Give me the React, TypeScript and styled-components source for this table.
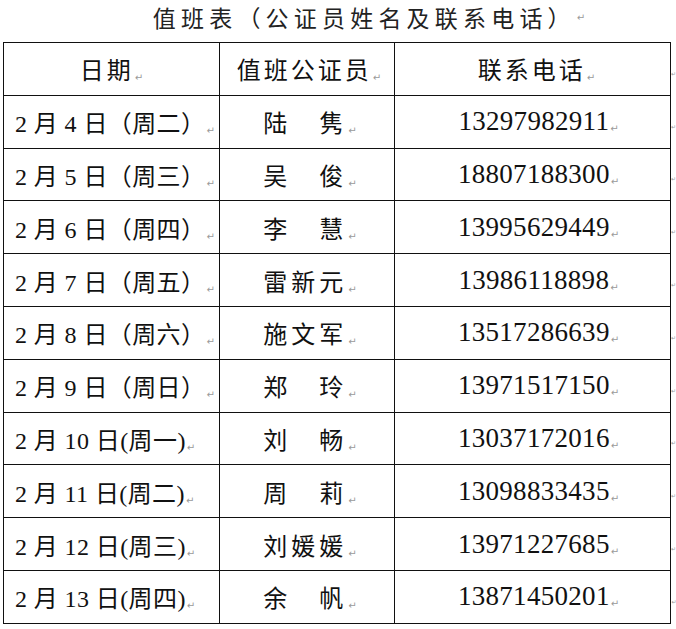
import styled, { createGlobalStyle } from "styled-components";

const GlobalStyle = createGlobalStyle`
  html, body {
    margin: 0;
    padding: 0;
    background: #fff;
  }
  body {
    font-family: "Liberation Serif", "Noto Sans CJK SC", serif;
    color: #111;
  }
`;

const Page = styled.div`
  width: 676px;
  height: 629px;
  overflow: hidden;
  background: #fff;
`;

const Title = styled.div`
  height: 42px;
  display: flex;
  align-items: center;
  justify-content: center;
  padding-left: 62px;
  padding-bottom: 8px;
  box-sizing: border-box;
  font-size: 23px;
  letter-spacing: 5.2px;
  color: #222;
`;

const Table = styled.table`
  border-collapse: collapse;
  margin-left: 3px;
  table-layout: fixed;
  width: 673px;
`;

const Cell = styled.td<{ $align?: "left" | "center"; $size?: number; $spacing?: number; $shift?: number }>`
  border: 1px solid #111;
  height: 52.8px;
  padding: 0;
  box-sizing: border-box;
  vertical-align: middle;
  text-align: ${(p) => p.$align ?? "center"};
  padding-left: ${(p) => (p.$align === "left" ? 11 : p.$shift ?? 0)}px;
  font-size: ${(p) => p.$size ?? 24}px;
  letter-spacing: ${(p) => p.$spacing ?? 1}px;
  white-space: nowrap;
  overflow: hidden;
`;

const EndCell = styled.td`
  border: none;
  padding: 0;
  vertical-align: middle;
  text-align: right;
`;

const Mark = styled.span<{ $small?: boolean }>`
  font-family: "DejaVu Sans", sans-serif;
  font-size: ${(p) => (p.$small ? 6 : 10)}px;
  color: #9a9a9a;
  letter-spacing: 0;
  margin-left: ${(p) => (p.$small ? 0 : 1)}px;
  vertical-align: -2px;
`;

const rows = [
  ["2 月 4 日（周二）", "陆　隽", "13297982911"],
  ["2 月 5 日（周三）", "吴　俊", "18807188300"],
  ["2 月 6 日（周四）", "李　慧", "13995629449"],
  ["2 月 7 日（周五）", "雷新元", "13986118898"],
  ["2 月 8 日（周六）", "施文军", "13517286639"],
  ["2 月 9 日（周日）", "郑　玲", "13971517150"],
  ["2 月 10 日(周一)", "刘　畅", "13037172016"],
  ["2 月 11 日(周二)", "周　莉", "13098833435"],
  ["2 月 12 日(周三)", "刘媛媛", "13971227685"],
  ["2 月 13 日(周四)", "余　帆", "13871450201"],
];

export default function App() {
  return (
    <Page>
      <GlobalStyle />
      <Title>
        值班表（公证员姓名及联系电话）<Mark>↵</Mark>
      </Title>
      <Table>
        <colgroup>
          <col style={{ width: 216 }} />
          <col style={{ width: 175 }} />
          <col style={{ width: 276 }} />
          <col style={{ width: 6 }} />
        </colgroup>
        <tbody>
          <tr>
            <Cell $spacing={3}>
              日期<Mark>↵</Mark>
            </Cell>
            <Cell $spacing={3} $shift={4}>
              值班公证员<Mark>↵</Mark>
            </Cell>
            <Cell $spacing={3} $shift={8}>
              联系电话<Mark>↵</Mark>
            </Cell>
            <EndCell>
              <Mark $small>↵</Mark>
            </EndCell>
          </tr>
          {rows.map(([date, name, phone]) => (
            <tr key={phone}>
              <Cell $align="left" $spacing={0.4}>
                {date}
                <Mark>↵</Mark>
              </Cell>
              <Cell $spacing={4} $shift={6}>
                {name}
                <Mark>↵</Mark>
              </Cell>
              <Cell $size={27} $spacing={0.3} $shift={12}>
                {phone}
                <Mark>↵</Mark>
              </Cell>
              <EndCell>
                <Mark $small>↵</Mark>
              </EndCell>
            </tr>
          ))}
        </tbody>
      </Table>
    </Page>
  );
}
